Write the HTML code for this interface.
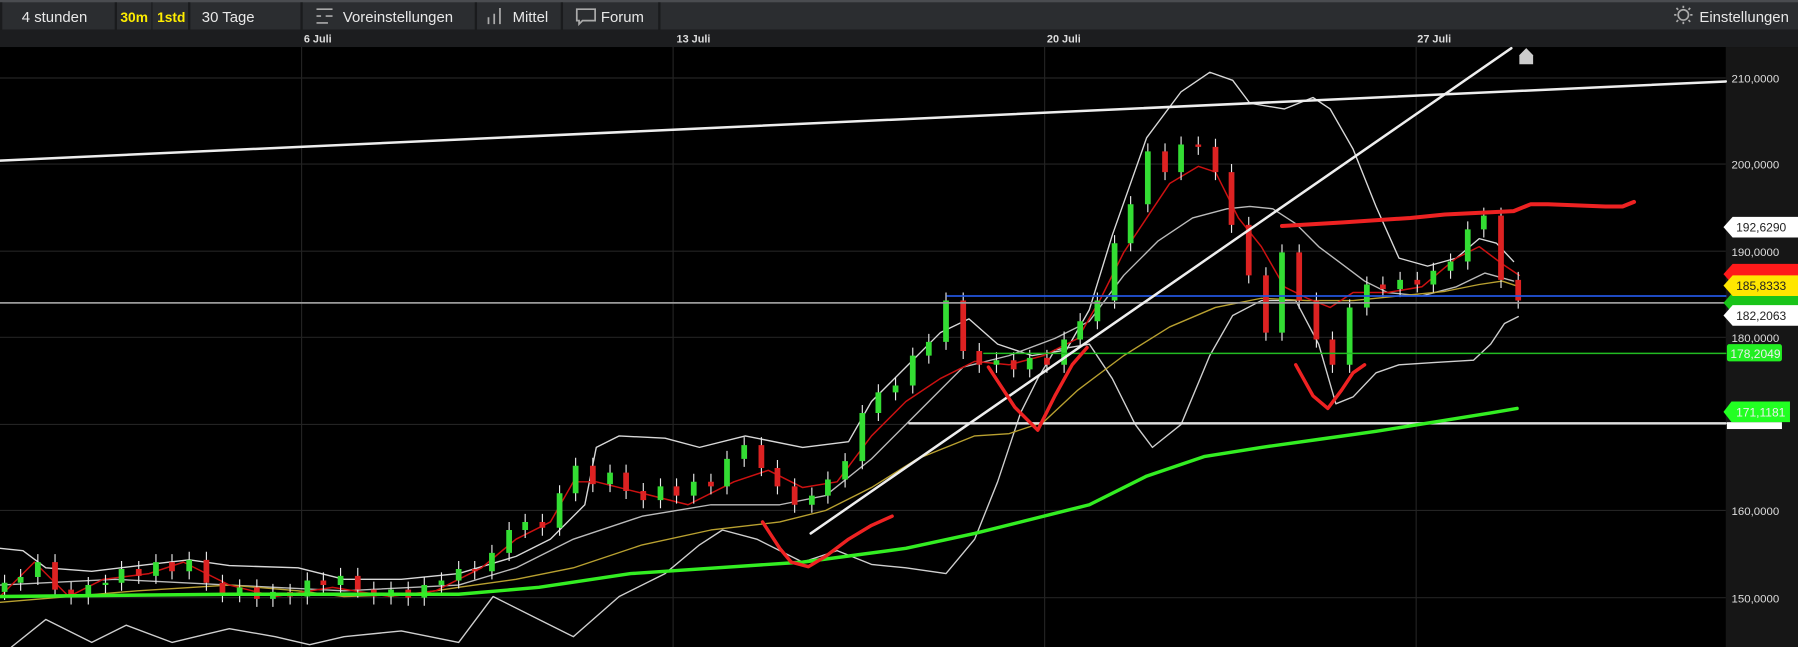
<!DOCTYPE html>
<html><head><meta charset="utf-8"><style>
html,body{margin:0;padding:0;background:#000;overflow:hidden}
svg{display:block}
text{font-family:"Liberation Sans",sans-serif}
</style></head><body>
<svg width="1798" height="647" viewBox="0 0 1568 564" preserveAspectRatio="none" xmlns="http://www.w3.org/2000/svg">
<rect width="1568" height="564" fill="#000"/>
<rect x="0" y="0" width="1568" height="26" fill="#2b2d30"/>
<rect x="0" y="0" width="1568" height="2" fill="#4a4c50"/>
<g fill="#1a1b1d">
<rect x="0" y="2" width="2" height="24"/><rect x="100" y="2" width="2" height="24"/><rect x="132" y="2" width="1" height="24"/><rect x="164" y="2" width="2" height="24"/><rect x="262" y="2" width="2" height="24"/><rect x="414" y="2" width="2" height="24"/><rect x="489" y="2" width="2" height="24"/><rect x="574" y="2" width="2" height="24"/>
</g>
<g font-size="13" fill="#e8e8e8">
<text x="19" y="19">4 stunden</text>
<text x="105" y="19" fill="#ffee00" font-weight="bold" font-size="12">30m</text>
<text x="137" y="19" fill="#ffee00" font-weight="bold" font-size="12">1std</text>
<text x="176" y="19">30 Tage</text>
<text x="299" y="19">Voreinstellungen</text>
<text x="447" y="19">Mittel</text>
<text x="524" y="19">Forum</text>
<text x="1482" y="19">Einstellungen</text>
</g>
<g stroke="#aaa" stroke-width="1.5" fill="none">
<path d="M276 8h14M276 14h4m4 0h6M276 20h10"/>
<path d="M426 21v-6M431 21v-9M436 21v-14"/>
<path d="M503 8h16v10h-11l-3 3v-3h-2z"/>
<circle cx="1468" cy="13" r="4.5"/><path d="M1468 5v2M1468 19v2M1460 13h2M1474 13h2M1462 7l1.5 1.5M1474 7l-1.5 1.5M1462 19l1.5-1.5M1474 19l-1.5-1.5"/>
</g>
<rect x="0" y="26" width="1568" height="15" fill="#1c1d1f"/>
<g font-size="9.5" font-weight="bold" fill="#ddd">
<text x="265" y="37">6 Juli</text><text x="590" y="37">13 Juli</text><text x="913" y="37">20 Juli</text><text x="1236" y="37">27 Juli</text>
</g>
<rect x="1505" y="41" width="63" height="523" fill="#161616"/>
<g stroke="#232323" stroke-width="1">
<path d="M263 41V564M587 41V564M911 41V564M1235 41V564"/>
<path d="M0 68H1505M0 143H1505M0 219H1505M0 294H1505M0 370H1505M0 445H1505M0 521H1505"/>
</g>
<g font-size="10" fill="#ddd">
<text x="1510" y="72">210,0000</text><text x="1510" y="147">200,0000</text><text x="1510" y="223">190,0000</text><text x="1510" y="298">180,0000</text><text x="1510" y="449">160,0000</text><text x="1510" y="525">150,0000</text>
</g>
<g fill="none" stroke-linejoin="round" stroke-linecap="round" stroke-width="1.2">
<polyline stroke="#d8d8d8" points="0,478 20,480 40,495 80,498 130,492 165,488 200,493 260,495 300,505 350,505 400,500 450,485 480,470 510,440 520,390 540,380 580,382 610,390 650,380 700,390 740,385 760,350 790,320 820,290 845,278 870,300 900,310 930,305 950,270 970,205 1000,120 1030,80 1055,63 1075,70 1090,90 1120,95 1145,85 1160,95 1180,130 1200,180 1220,225 1245,232 1270,225 1290,208 1305,212 1320,228"/>
<polyline stroke="#cfcfcf" points="10,564 40,540 80,560 110,545 150,560 200,548 240,555 270,562 300,555 350,550 400,560 430,520 470,540 500,555 540,520 580,500 610,475 630,462 660,470 700,490 730,480 760,492 790,495 825,500 850,470 870,420 890,360 905,330 920,305 950,300 970,330 990,370 1005,390 1030,370 1055,310 1075,275 1100,262 1130,262 1150,300 1165,352 1180,346 1200,325 1220,318 1250,316 1285,314 1300,300 1312,282 1324,276"/>
<polyline stroke="#bbbbbb" points="0,510 100,505 200,510 300,515 400,510 450,495 500,470 560,450 620,440 680,440 720,432 760,400 800,360 840,320 880,310 920,295 950,280 980,240 1010,210 1040,190 1070,182 1090,180 1110,182 1130,195 1150,215 1170,230 1190,245 1210,255 1240,258 1270,250 1295,238 1320,245"/>
<polyline stroke="#b8a030" points="0,525 60,520 120,515 200,510 260,515 300,520 360,518 400,512 450,505 500,495 560,475 620,462 680,455 720,445 760,425 800,400 850,380 880,378 910,368 940,340 980,310 1020,285 1060,268 1100,260 1140,262 1180,262 1220,258 1260,254 1290,248 1310,245 1325,250"/>
<polyline stroke="#cc1111" stroke-width="1.3" points="0,520 30,490 60,520 90,505 130,500 160,490 200,510 240,520 290,512 340,520 380,515 420,495 450,470 480,455 500,420 520,420 560,430 600,440 640,420 670,410 700,425 730,420 760,380 790,350 820,330 850,315 880,318 910,310 940,295 960,260 980,220 1000,190 1020,160 1045,145 1060,150 1080,190 1100,215 1120,250 1140,260 1160,268 1180,255 1210,255 1240,250 1270,225 1290,215 1310,230 1325,240"/>
</g>
<!-- candles: wicks -->
<path stroke="#e8e8e8" stroke-width="1" fill="none" d="M4 501V523M18 496V515M33 483V510M48 483V521M62 507V527M77 503V527M92 501V517M106 489V515M121 489V509M136 483V509M150 483V505M165 481V505M180 481V515M194 501V525M209 505V525M224 505V529M238 509V529M253 509V527M268 499V527M282 499V517M297 495V517M312 495V521M326 507V527M341 507V527M356 507V528M370 503V528M385 499V517M400 489V513M414 489V505M429 475V505M444 455V489M458 448V469M473 448V467M488 423V467M502 399V437M517 399V429M532 405V429M546 405V435M561 421V443M576 417V443M590 417V439M605 413V439M620 413V431M634 393V431M649 381V407M664 381V415M678 401V431M693 417V447M708 425V447M722 411V439M737 395V425M752 353V409M766 335V367M781 329V349M796 303V343M810 291V317M825 255V305M840 255V313M854 299V325M869 307V325M884 307V329M898 305V329M913 305V325M928 289V325M942 273V303M957 255V287M972 205V269M986 171V219M1001 125V185M1016 125V157M1030 119V157M1045 119V135M1060 121V157M1074 143V203M1089 189V247M1104 233V297M1118 213V297M1133 213V269M1148 255V303M1162 289V325M1177 261V325M1192 241V275M1206 241V259M1221 237V259M1236 237V255M1250 229V255M1265 221V243M1280 193V235M1294 181V207M1309 181V251M1324 237V269"/>
<!-- green bodies -->
<path stroke="#33dd33" stroke-width="5" fill="none" d="M4 516V508M18 508V503M33 503V490M77 520V510M92 510V508M106 508V496M136 502V490M165 498V488M209 518V512M238 522V516M268 520V506M297 510V502M341 520V514M370 521V510M385 510V506M400 506V496M429 498V482M444 482V462M458 462V455M488 460V430M502 430V406M532 422V412M576 436V424M605 432V420M634 424V400M649 400V388M708 440V432M722 432V418M737 418V402M752 402V360M766 360V342M781 342V336M796 336V310M810 310V298M825 298V262M869 318V314M898 322V312M928 318V296M942 296V280M957 280V262M972 262V212M986 212V178M1001 178V132M1030 150V126M1118 290V220M1177 318V268M1192 268V248M1221 252V244M1250 248V236M1265 236V228M1280 228V200M1294 200V188"/>
<!-- red bodies -->
<path stroke="#dd2222" stroke-width="5" fill="none" d="M48 490V514M62 514V520M121 496V502M150 490V498M180 488V508M194 508V518M224 512V522M253 516V520M282 506V510M312 502V514M326 514V520M356 514V521M414 496V498M473 455V460M517 406V422M546 412V428M561 428V436M590 424V432M620 420V424M664 388V408M678 408V424M693 424V440M840 262V306M854 306V318M884 314V322M913 312V318M1016 132V150M1045 126V128M1060 128V150M1074 150V196M1089 196V240M1104 240V290M1133 220V262M1148 262V296M1162 296V318M1206 248V252M1236 244V248M1309 188V244M1324 244V262"/>
<g fill="none" stroke-linejoin="round" stroke-linecap="round">
<polyline stroke="#9a9a9a" stroke-width="1.5" points="0,264 1505,264"/>
<polyline stroke="#2255dd" stroke-width="1.5" points="826,258 1505,258"/>
<polyline stroke="#22bb22" stroke-width="1.3" points="858,308 1505,308"/>
<polyline stroke="#e0e0e0" stroke-width="2" points="793,369 1505,369"/>
<polyline stroke="#eeeeee" stroke-width="2.2" points="0,140 1505,71"/>
<polyline stroke="#eeeeee" stroke-width="2.2" points="707,465 1318,42"/>
<polyline stroke="#33ee22" stroke-width="3" points="0,520 200,518 400,518 470,512 550,500 700,490 790,478 850,465 950,440 1000,415 1050,398 1100,390 1150,383 1200,376 1250,368 1300,360 1323,356"/>
<polyline stroke="#ee2222" stroke-width="3.5" points="1118,197 1170,194 1230,190 1260,187 1300,185 1320,184 1335,178 1350,178 1400,180 1415,180 1425,176"/>
<polyline stroke="#ee2222" stroke-width="3" points="665,455 680,478 690,490 705,494 720,485 740,470 760,458 778,450"/>
<polyline stroke="#ee2222" stroke-width="3" points="862,320 885,355 905,375 920,345 935,318 948,303"/>
<polyline stroke="#ee2222" stroke-width="3" points="1130,318 1145,345 1158,356 1170,340 1180,325 1190,318"/>
</g>
<g font-size="10.5">
<path d="M1503 264l8-9h57v18h-57z" fill="#19c419"/>
<path d="M1503 239l8-9h57v18h-57z" fill="#ff1a1a"/>
<path d="M1503 249l8-9h57v18h-57z" fill="#ffe600"/><text x="1514" y="253" fill="#222">185,8333</text>
<path d="M1503 198l8-9h57v18h-57z" fill="#fff"/><text x="1514" y="202" fill="#222">192,6290</text>
<path d="M1503 275l8-9h57v18h-57z" fill="#fff"/><text x="1514" y="279" fill="#222">182,2063</text>
<rect x="1506" y="300" width="48" height="15" rx="2" fill="#22ee22"/><text x="1509" y="312" fill="#eee">178,2049</text>
<rect x="1506" y="368" width="48" height="6" fill="#fff"/>
<path d="M1503 359l7-9h51v18h-51z" fill="#22ff22"/><text x="1514" y="363" fill="#eee">171,1181</text>
</g>
<path d="M1325 56v-8l6-6 6 6v8z" fill="#ccc"/>
</svg>
</body></html>
